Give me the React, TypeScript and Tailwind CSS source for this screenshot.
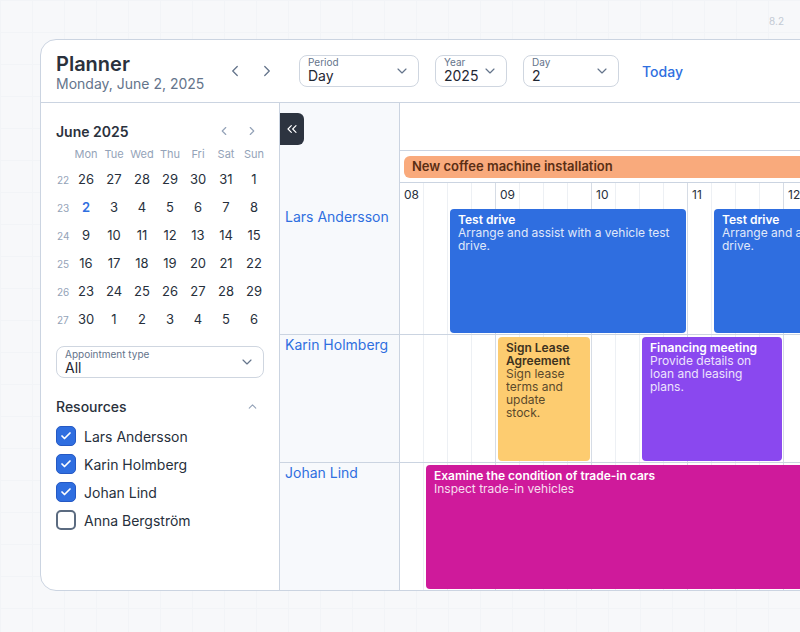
import { FC } from 'react'
import { ChevronLeft, ChevronRight, ChevronDown, ChevronUp, ChevronsLeft, Check } from 'lucide-react'

type Ev = { start: number; end: number; title: string; text: string; tone: string }

const HOUR = 96
const FIRST = 8

const rows: { name: string; events: Ev[] }[] = [
	{
		name: 'Lars Andersson',
		events: [
			{ start: 8.5, end: 11, title: 'Test drive', text: 'Arrange and assist with a vehicle test drive.', tone: 'bg-[#2f6ee0] text-white' },
			{ start: 11.25, end: 13.75, title: 'Test drive', text: 'Arrange and assist with a vehicle test drive.', tone: 'bg-[#2f6ee0] text-white' },
		],
	},
	{
		name: 'Karin Holmberg',
		events: [
			{ start: 9, end: 10, title: 'Sign Lease Agreement', text: 'Sign lease terms and update stock.', tone: 'bg-[#fdcc70] text-[#3d3220]' },
			{ start: 10.5, end: 12, title: 'Financing meeting', text: 'Provide details on loan and leasing plans.', tone: 'bg-[#8a48ef] text-white' },
		],
	},
	{
		name: 'Johan Lind',
		events: [
			{ start: 8.25, end: 14, title: 'Examine the condition of trade-in cars', text: 'Inspect trade-in vehicles', tone: 'bg-[#cf1a9b] text-white' },
		],
	},
]

const weeks = [
	[22, [26, 27, 28, 29, 30, 31, 1]],
	[23, [2, 3, 4, 5, 6, 7, 8]],
	[24, [9, 10, 11, 12, 13, 14, 15]],
	[25, [16, 17, 18, 19, 20, 21, 22]],
	[26, [23, 24, 25, 26, 27, 28, 29]],
	[27, [30, 1, 2, 3, 4, 5, 6]],
] as [number, number[]][]

const gridLines =
	'bg-[linear-gradient(to_left,#d6dce5_1px,transparent_1px),linear-gradient(to_left,#edf0f4_1px,transparent_1px)] bg-[length:96px_100%,24px_100%]'

const Select: FC<{ label: string; value: string; width: string }> = ({ label, value, width }) => (
	<div className={`${width} h-[32px] flex items-center justify-between rounded-lg border border-[#cfd6e0] pl-2 pr-2`}>
		<div className="flex flex-col">
			<span className="text-[10px] leading-[11px] text-[#64748b]">{label}</span>
			<span className="text-[14px] leading-[16px] text-[#1f2733]">{value}</span>
		</div>
		<ChevronDown className="w-4 h-4 text-[#64748b]" strokeWidth={1.75} />
	</div>
)

const Box: FC<{ on: boolean }> = ({ on }) =>
	on ? (
		<span className="w-5 h-5 flex items-center justify-center rounded-[5px] bg-[#2f6ee0] border border-[#2559c4]">
			<Check className="w-3 h-3 text-white" strokeWidth={3.5} />
		</span>
	) : (
		<span className="w-5 h-5 rounded-[5px] border-2 border-[#5b6b80] bg-white" />
	)

const App: FC = () => {
	return (
		<div className="w-[800px] h-[632px] overflow-hidden bg-[#f7f8fa] bg-[linear-gradient(to_right,#f2f4f7_1px,transparent_1px),linear-gradient(to_bottom,#f2f4f7_1px,transparent_1px)] bg-[length:32px_32px] pt-[39px] pl-[40px] font-['Inter','Noto_Sans',sans-serif] relative">
			<span className="absolute right-[16px] top-[14px] text-[10px] text-[#c3cad4]">8.2</span>
			<div className="w-[1000px] h-[552px] flex flex-col rounded-l-2xl border border-[#cbd4e1] bg-white overflow-hidden">
				{/* header */}
				<div className="h-[63px] flex-none flex items-center border-b border-[#cbd4e1] pl-[15px]">
					<div className="w-[160px] flex flex-col pt-[4px]">
						<h1 className="text-[20px] leading-[22px] font-semibold text-[#2a313c]">Planner</h1>
						<p className="text-[14px] leading-[18px] text-[#64748b]">Monday, June 2, 2025</p>
					</div>
					<div className="flex items-center gap-2 ml-[7px]">
						<button className="w-6 h-6 flex items-center justify-center text-[#64748b]">
							<ChevronLeft className="w-[18px] h-[18px]" strokeWidth={1.75} />
						</button>
						<button className="w-6 h-6 flex items-center justify-center text-[#64748b]">
							<ChevronRight className="w-[18px] h-[18px]" strokeWidth={1.75} />
						</button>
					</div>
					<div className="flex items-center gap-[16px] ml-[20px] mt-[-1px]">
						<Select label="Period" value="Day" width="w-[120px]" />
						<Select label="Year" value="2025" width="w-[72px]" />
						<Select label="Day" value="2" width="w-[96px]" />
					</div>
					<button className="ml-[23px] text-[14px] font-medium text-[#2f6fe0]">Today</button>
				</div>

				<div className="flex flex-1 min-h-0">
					{/* sidebar */}
					<aside className="w-[239px] flex-none border-r border-[#cbd4e1] px-[15px] pt-[16px]">
						<div className="flex items-center justify-between h-6">
							<span className="text-[14px] font-semibold text-[#2a313c]">June 2025</span>
							<div className="flex items-center text-[#94a3b8] mr-[-2px]">
								<span className="w-7 flex justify-center"><ChevronLeft className="w-[14px] h-[14px]" /></span>
								<span className="w-7 flex justify-center"><ChevronRight className="w-[14px] h-[14px]" /></span>
							</div>
						</div>
						<div className="grid grid-cols-[16px_repeat(7,28px)]">
							<span className="h-[23px]" />
							{['Mon', 'Tue', 'Wed', 'Thu', 'Fri', 'Sat', 'Sun'].map(d => (
								<span key={d} className="h-[23px] flex items-center justify-center text-[11px] text-[#94a3b8]">
									{d}
								</span>
							))}
							{weeks.map(([w, days]) => (
								<>
									<span key={'w' + w} className="h-[28px] flex items-center text-[10px] text-[#94a3b8] pl-[1px]">
										{w}
									</span>
									{days.map((d, i) => (
										<span
											key={w + '-' + i}
											className={`h-[28px] flex items-center justify-center text-[13px] ${w === 23 && d === 2 ? 'text-[#2f6fe0] font-semibold' : 'text-[#27303c]'}`}
										>
											{d}
										</span>
									))}
								</>
							))}
						</div>
						<div className="mt-[12px] h-[32px] flex items-center justify-between rounded-lg border border-[#cfd6e0] pl-2 pr-2">
							<div className="flex flex-col">
								<span className="text-[10px] leading-[11px] text-[#64748b]">Appointment type</span>
								<span className="text-[14px] leading-[16px] text-[#1f2733]">All</span>
							</div>
							<ChevronDown className="w-4 h-4 text-[#64748b]" strokeWidth={1.75} />
						</div>
						<div className="mt-[18px] flex items-center justify-between h-5">
							<span className="text-[14px] font-medium text-[#2a313c]">Resources</span>
							<ChevronUp className="w-[13px] h-[13px] text-[#94a3b8] mr-[5px]" />
						</div>
						<div className="mt-[6px] flex flex-col">
							{['Lars Andersson', 'Karin Holmberg', 'Johan Lind', 'Anna Bergström'].map((n, i) => (
								<label key={n} className="h-[28px] flex items-center gap-[8px]">
									<Box on={i < 3} />
									<span className="text-[14px] text-[#27303c]">{n}</span>
								</label>
							))}
						</div>
					</aside>

					{/* scheduler */}
					<div className="flex-1 flex flex-col">
						<div className="flex flex-none">
							<div className="w-[120px] h-[104px] flex-none border-r border-[#cbd4e1] bg-[#f7f9fc] pt-[10px]">
								<button className="w-6 h-8 flex items-center justify-center rounded-r-md bg-[#2d3440] text-white">
									<ChevronsLeft className="w-4 h-4" strokeWidth={1.75} />
								</button>
							</div>
							<div className="flex-1 flex flex-col">
								<div className="h-[48px] border-b border-[#cbd4e1]" />
								<div className="h-[32px] border-b border-[#cbd4e1] flex items-center px-[4px]">
									<div className="h-[22px] flex-1 flex items-center rounded-md bg-[#f9aa7c] px-2 text-[13px] font-semibold text-[#5a2e14]">
										New coffee machine installation
									</div>
								</div>
								<div className={`h-[24px] flex ${gridLines}`}>
									{['08', '09', '10', '11', '12', '13'].map(h => (
										<span key={h} className="w-[96px] flex-none pl-[4px] text-[12px] leading-[24px] text-[#27303c]">
											{h}
										</span>
									))}
								</div>
							</div>
						</div>
						{rows.map((r, i) => (
							<div key={r.name} className={`flex ${i === rows.length - 1 ? 'flex-1' : 'h-[128px] border-b border-[#cbd4e1]'}`}>
								<div className="w-[120px] flex-none border-r border-[#cbd4e1] bg-[#f7f9fc] pl-[5px] text-[14px] leading-[20px] text-[#2f6fe0]">
									{r.name}
								</div>
								<div className={`relative flex-1 ${gridLines}`}>
									{r.events.map(e => (
										<div
											key={e.title + e.start}
											className={`absolute top-[2px] bottom-[1px] rounded-[4px] px-2 pt-[4px] text-[12px] leading-[13px] overflow-hidden ${e.tone}`}
											style={{ left: (e.start - FIRST) * HOUR + 2, width: (e.end - e.start) * HOUR - 4 }}
										>
											<div className="font-semibold">{e.title}</div>
											<div className="opacity-85">{e.text}</div>
										</div>
									))}
								</div>
							</div>
						))}
					</div>
				</div>
			</div>
		</div>
	)
}

export default App
